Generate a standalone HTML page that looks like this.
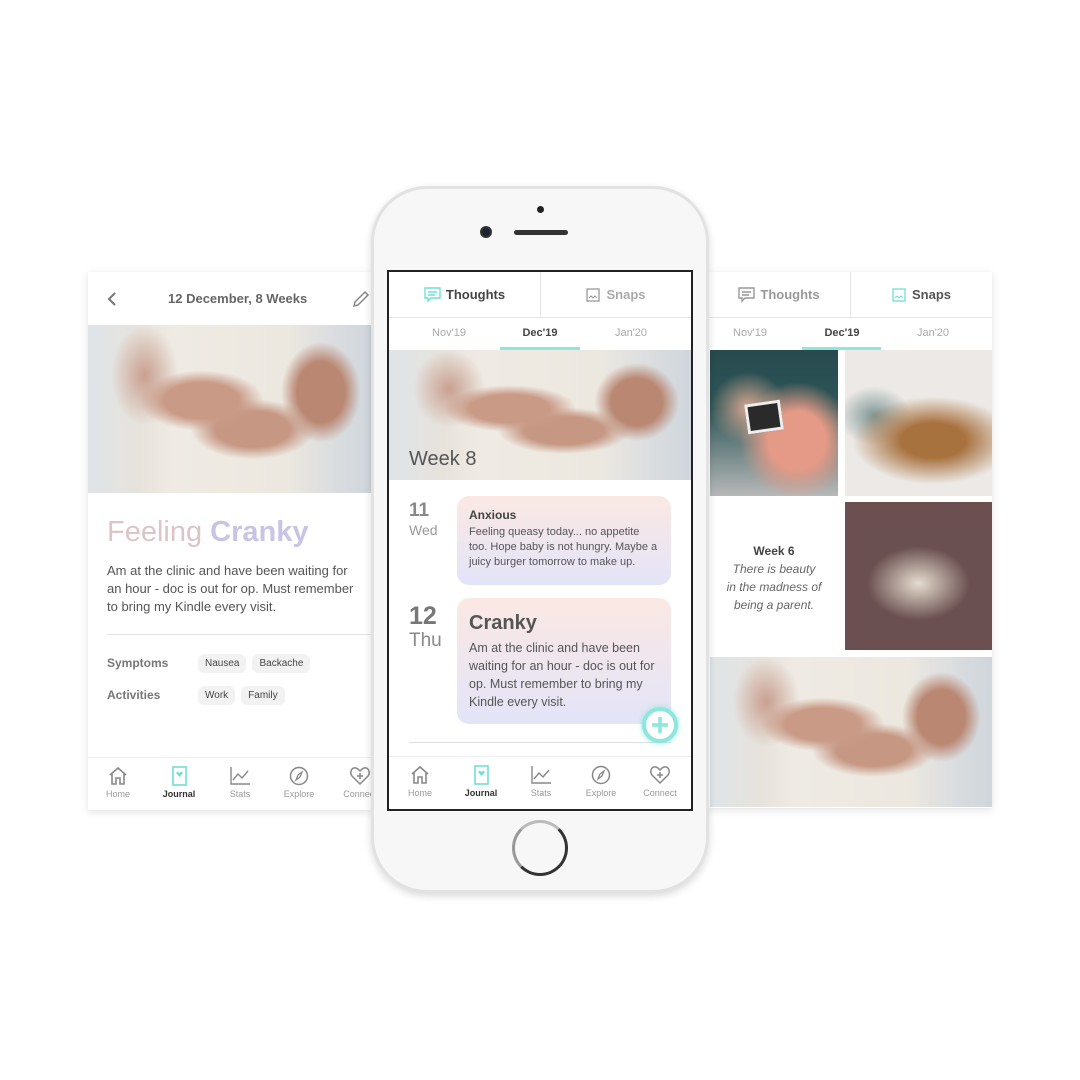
<!DOCTYPE html>
<html><head><meta charset="utf-8"><style>
*{margin:0;padding:0;box-sizing:border-box}
body{width:1080px;height:1080px;background:#fff;position:relative;overflow:hidden;font-family:"Liberation Sans",sans-serif;color:#555}
.abs{position:absolute}
.card{position:absolute;background:#fff;box-shadow:0 2px 8px rgba(0,0,0,.12);overflow:hidden}
.belly{background:
radial-gradient(ellipse 22% 18% at 40% 45%,#c99a86 0,#c99a86 60%,transparent 100%),
radial-gradient(ellipse 22% 18% at 58% 62%,#c69884 0,#c69884 60%,transparent 100%),
radial-gradient(ellipse 14% 30% at 82% 40%,#b98772 0,#b98772 60%,transparent 100%),
radial-gradient(ellipse 12% 30% at 20% 30%,#c9a090 0,transparent 100%),
linear-gradient(90deg,#dfe4e8 0,#e7e3dc 18%,#efebe4 30%,#ece8e0 70%,#d9dcdf 88%,#cfd6dc 100%)}
.nav{position:absolute;left:0;right:0;bottom:0;height:52px;border-top:1px solid #eee;background:#fff}
.nav div{position:absolute;top:8px;width:60px;text-align:center;font-size:9px;color:#999}
.nav div svg{display:block;margin:0 auto 3px}
.nav .on{color:#333;font-weight:bold}
.tabs{position:absolute;left:0;right:0;top:0;height:46px;border-bottom:1px solid #e5e5e5;font-size:13px;font-weight:bold}
.tabs .t{position:absolute;top:0;height:46px;line-height:46px;text-align:center;width:50%}
.months{position:absolute;left:0;right:0;top:46px;height:32px;font-size:11px;color:#aaa}
.months span{position:absolute;top:9px;width:80px;text-align:center}
.chip{display:inline-block;background:#f2f2f2;border-radius:6px;font-size:10px;color:#444;padding:4px 7px;margin-right:6px}
</style></head><body>

<div class="card" style="left:88px;top:272px;width:284px;height:538px">
 <svg class="abs" style="left:17px;top:19px" width="14" height="16" viewBox="0 0 14 16"><path d="M10 2 L4 8 L10 14" fill="none" stroke="#777" stroke-width="2"/></svg>
 <div class="abs" style="left:80px;top:19px;font-size:13px;font-weight:bold;color:#666">12 December, 8 Weeks</div>
 <svg class="abs" style="left:264px;top:18px" width="18" height="18" viewBox="0 0 18 18"><path d="M2 16 L3 12 L13 2 L16 5 L6 15 Z" fill="none" stroke="#888" stroke-width="1.5"/></svg>
 <div class="abs belly" style="left:0;top:53px;width:284px;height:168px"></div>
 <div class="abs" style="left:19px;top:244px;font-size:29px;color:#dcc4c8;white-space:nowrap">Feeling <b style="color:#c8c4e6">Cranky</b></div>
 <div class="abs" style="left:19px;top:290px;width:252px;font-size:13px;line-height:18px;color:#555">Am at the clinic and have been waiting for an hour - doc is out for op. Must remember to bring my Kindle every visit.</div>
 <div class="abs" style="left:19px;top:362px;width:265px;border-top:1px solid #e3e3e3"></div>
 <div class="abs" style="left:19px;top:384px;font-size:12px;font-weight:bold;color:#777">Symptoms</div>
 <div class="abs" style="left:110px;top:381px"><span class="chip">Nausea</span><span class="chip">Backache</span></div>
 <div class="abs" style="left:19px;top:416px;font-size:12px;font-weight:bold;color:#777">Activities</div>
 <div class="abs" style="left:110px;top:413px"><span class="chip">Work</span><span class="chip">Family</span></div>
 <div class="nav" style="height:53px">
  <div style="left:0"><svg width="22" height="20" viewBox="0 0 22 20"><path d="M3 9 L11 2 L19 9 M5 8 V18 H9 V12 H13 V18 H17 V8" fill="none" stroke="#888" stroke-width="1.6"/></svg>Home</div>
  <div class="on" style="left:61px"><svg width="22" height="20" viewBox="0 0 22 20"><rect x="5" y="1" width="13" height="18" fill="none" stroke="#6fe0d6" stroke-width="1.6"/><path d="M11.5 7 l2 -1.5 l1.5 1.5 l-3.5 4 l-3.5 -4 l1.5 -1.5 z" fill="#6fe0d6"/></svg>Journal</div>
  <div style="left:122px"><svg width="22" height="20" viewBox="0 0 22 20"><path d="M2 1 V18 H21 M4 14 L9 8 L13 12 L19 5" fill="none" stroke="#888" stroke-width="1.4"/></svg>Stats</div>
  <div style="left:181px"><svg width="22" height="20" viewBox="0 0 22 20"><circle cx="11" cy="10" r="8.5" fill="none" stroke="#888" stroke-width="1.5"/><path d="M14 6 L12 11 L8 14 L10 9 Z" fill="none" stroke="#888" stroke-width="1.3"/></svg>Explore</div>
  <div style="left:242px"><svg width="22" height="20" viewBox="0 0 22 20"><path d="M11 18 L3 10 C0 6 3 1 7 2 C9 2.5 10 4 11 5 C12 4 13 2.5 15 2 C19 1 22 6 19 10 Z M11 7 V13 M8 10 H14" fill="none" stroke="#888" stroke-width="1.5"/></svg>Connect</div>
 </div>
</div>

<div class="card" style="left:708px;top:272px;width:284px;height:536px">
 <div class="tabs"><div class="t" style="left:0;color:#999"><svg style="vertical-align:-4px;margin-right:5px" width="17" height="16" viewBox="0 0 17 16"><path d="M1 1 H16 V11 H7 L4 14 V11 H1 Z M4 5 H13 M4 8 H11" fill="none" stroke="#999" stroke-width="1.4"/></svg>Thoughts</div><div class="t" style="left:50%;border-left:1px solid #e5e5e5;color:#555"><svg style="vertical-align:-3px;margin-right:6px" width="14" height="14" viewBox="0 0 14 14"><rect x="1" y="1" width="12" height="12" fill="none" stroke="#6fe0d6" stroke-width="1.3"/><path d="M3 10 L5 8 L7 10 L9 8 L11 10" fill="none" stroke="#6fe0d6"/></svg>Snaps</div></div>
 <div class="months"><span style="left:2px">Nov'19</span><span style="left:94px;color:#444;font-weight:bold">Dec'19</span><span style="left:185px">Jan'20</span><div class="abs" style="left:94px;top:29px;width:79px;height:3px;background:#8ee6dc"></div></div>
 <div class="abs" style="left:2px;top:78px;width:128px;height:146px;background:radial-gradient(ellipse 30% 25% at 30% 40%,#d8a890 0,transparent 100%),radial-gradient(ellipse 45% 40% at 68% 62%,#e49a86 0,#e49a86 50%,transparent 100%),linear-gradient(180deg,#274a4e 0,#2e5658 40%,#b7b9b8 100%)"></div>
 <div class="abs" style="left:38px;top:130px;width:36px;height:30px;background:#2a2a2a;border:3px solid #eee;transform:rotate(-8deg)"></div>
 <div class="abs" style="left:137px;top:78px;width:147px;height:146px;background:radial-gradient(ellipse 55% 30% at 60% 62%,#a8723f 0,#a8723f 40%,transparent 100%),radial-gradient(ellipse 25% 20% at 20% 45%,#7f9796 0,transparent 100%),#ece9e6"></div>
 <div class="abs" style="left:2px;top:270px;width:128px;text-align:center;font-size:12px;line-height:18px;color:#666"><b style="color:#444">Week 6</b><br><i>There is beauty<br>in the madness of<br>being a parent.</i></div>
 <div class="abs" style="left:137px;top:230px;width:147px;height:148px;background:radial-gradient(ellipse 35% 25% at 50% 55%,#e6dcd0 0,#6a5050 100%),radial-gradient(ellipse 30% 50% at 90% 60%,#b08080 0,transparent 100%),#7a5a5c"></div>
 <div class="abs belly" style="left:2px;top:385px;width:282px;height:150px"></div>
</div>

<div class="abs" style="left:371px;top:186px;width:338px;height:707px;border-radius:56px;background:#f7f7f7;border:3px solid #e2e2e2;box-shadow:0 3px 8px rgba(0,0,0,.15)"></div>
<div class="abs" style="left:537px;top:206px;width:7px;height:7px;border-radius:50%;background:#222"></div>
<div class="abs" style="left:480px;top:226px;width:12px;height:12px;border-radius:50%;background:#1f2230;border:2px solid #333"></div>
<div class="abs" style="left:514px;top:230px;width:54px;height:5px;border-radius:3px;background:#333"></div>
<div class="abs" style="left:512px;top:820px;width:56px;height:56px;border-radius:50%;border:3px solid #333;border-top-color:#bbb;border-left-color:#999;background:#f7f7f7"></div>

<div class="abs" style="left:387px;top:270px;width:306px;height:541px;border:2px solid #222;background:#fff;overflow:hidden">
 <div class="tabs"><div class="t" style="left:0;color:#444"><svg style="vertical-align:-4px;margin-right:5px" width="17" height="16" viewBox="0 0 17 16"><path d="M1 1 H16 V11 H7 L4 14 V11 H1 Z M4 5 H13 M4 8 H11" fill="none" stroke="#6fe0d6" stroke-width="1.4"/></svg>Thoughts</div><div class="t" style="left:50%;border-left:1px solid #e5e5e5;color:#aaa"><svg style="vertical-align:-3px;margin-right:6px" width="14" height="14" viewBox="0 0 14 14"><rect x="1" y="1" width="12" height="12" fill="none" stroke="#999" stroke-width="1.3"/><path d="M3 10 L5 8 L7 10 L9 8 L11 10" fill="none" stroke="#999"/></svg>Snaps</div></div>
 <div class="months"><span style="left:20px">Nov'19</span><span style="left:111px;color:#444;font-weight:bold">Dec'19</span><span style="left:202px">Jan'20</span><div class="abs" style="left:111px;top:29px;width:80px;height:3px;background:#8ee6dc"></div></div>
 <div class="abs belly" style="left:0;top:78px;width:302px;height:130px"></div>
 <div class="abs" style="left:20px;top:176px;font-size:20px;color:#555">Week 8</div>
 <div class="abs" style="left:20px;top:228px;font-size:19px;font-weight:bold;color:#888">11</div>
 <div class="abs" style="left:20px;top:250px;font-size:14px;color:#999">Wed</div>
 <div class="abs" style="left:68px;top:224px;width:214px;height:89px;border-radius:12px;background:linear-gradient(180deg,#fbe8e4,#e3e4f8);padding:12px 12px">
  <div style="font-size:12px;font-weight:bold;color:#444">Anxious</div>
  <div style="font-size:11px;line-height:15px;color:#555;margin-top:3px">Feeling queasy today... no appetite too. Hope baby is not hungry. Maybe a juicy burger tomorrow to make up.</div>
 </div>
 <div class="abs" style="left:20px;top:330px;font-size:25px;font-weight:bold;color:#777">12</div>
 <div class="abs" style="left:20px;top:358px;font-size:19px;color:#888">Thu</div>
 <div class="abs" style="left:68px;top:326px;width:214px;height:126px;border-radius:12px;background:linear-gradient(180deg,#fbe8e4,#e3e4f8);padding:14px 12px">
  <div style="font-size:20px;font-weight:bold;color:#555">Cranky</div>
  <div style="font-size:12.5px;line-height:18px;color:#555;margin-top:4px">Am at the clinic and have been waiting for an hour - doc is out for op. Must remember to bring my Kindle every visit.</div>
 </div>
 <div class="abs" style="left:20px;top:470px;width:262px;border-top:1px solid #ddd"></div>
 <div class="abs" style="left:253px;top:435px;width:36px;height:36px;border-radius:50%;border:4px solid #8ee6dc;background:#fff;box-shadow:0 0 6px #8ee6dc"><svg class="abs" style="left:5px;top:5px" width="18" height="18" viewBox="0 0 18 18"><path d="M9 1 V17 M1 9 H17" stroke="#8ee6dc" stroke-width="3.5"/></svg></div>
 <div class="nav" style="height:53px">
  <div style="left:1px"><svg width="22" height="20" viewBox="0 0 22 20"><path d="M3 9 L11 2 L19 9 M5 8 V18 H9 V12 H13 V18 H17 V8" fill="none" stroke="#888" stroke-width="1.6"/></svg>Home</div>
  <div class="on" style="left:62px"><svg width="22" height="20" viewBox="0 0 22 20"><rect x="5" y="1" width="13" height="18" fill="none" stroke="#6fe0d6" stroke-width="1.6"/><path d="M11.5 7 l2 -1.5 l1.5 1.5 l-3.5 4 l-3.5 -4 l1.5 -1.5 z" fill="#6fe0d6"/></svg>Journal</div>
  <div style="left:122px"><svg width="22" height="20" viewBox="0 0 22 20"><path d="M2 1 V18 H21 M4 14 L9 8 L13 12 L19 5" fill="none" stroke="#888" stroke-width="1.4"/></svg>Stats</div>
  <div style="left:182px"><svg width="22" height="20" viewBox="0 0 22 20"><circle cx="11" cy="10" r="8.5" fill="none" stroke="#888" stroke-width="1.5"/><path d="M14 6 L12 11 L8 14 L10 9 Z" fill="none" stroke="#888" stroke-width="1.3"/></svg>Explore</div>
  <div style="left:241px"><svg width="22" height="20" viewBox="0 0 22 20"><path d="M11 18 L3 10 C0 6 3 1 7 2 C9 2.5 10 4 11 5 C12 4 13 2.5 15 2 C19 1 22 6 19 10 Z M11 7 V13 M8 10 H14" fill="none" stroke="#888" stroke-width="1.5"/></svg>Connect</div>
 </div>
</div>
</body></html>
